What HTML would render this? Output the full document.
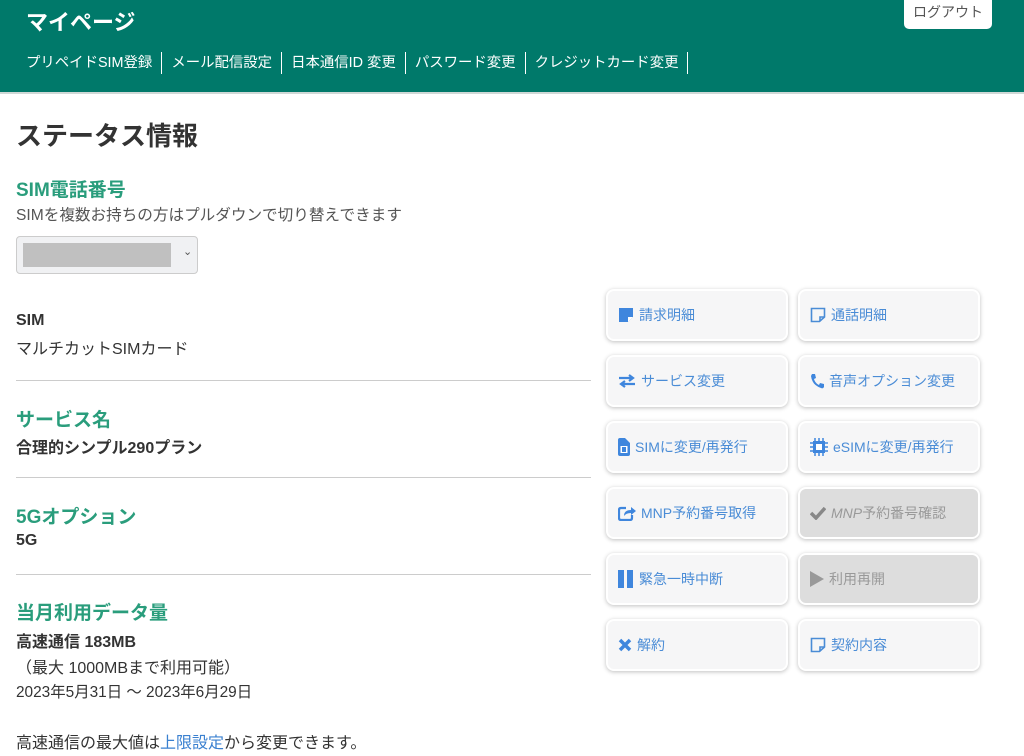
<!DOCTYPE html><html><head><meta charset="utf-8"><style>
body{margin:0;width:1024px;height:756px;overflow:hidden;background:#fff;font-family:"Liberation Sans","Noto Sans CJK JP",sans-serif;color:#333;position:relative}
.hd{position:absolute;left:0;top:0;width:1024px;height:92px;background:#00796a;border-bottom:2px solid #cfd8d6}
.t{position:absolute}
.nav{position:absolute;top:52px;left:26px;display:flex;font-size:14.4px;color:#fff}
.nav span{padding:0 9px;border-right:1px solid #fff;line-height:22px}
.nav span:first-child{padding-left:0}
.lo{position:absolute;left:904px;top:0;width:88px;height:29px;background:#fff;border-radius:0 0 5px 5px;font-size:14px;color:#555;text-align:center;line-height:24px}
.g{color:#2a9d7c;font-weight:bold;font-size:19px}
.hr{position:absolute;left:16px;width:575px;height:1px;background:#ccc}
.b{position:absolute;height:48px;background:#f6f6f7;border:2px solid #fff;border-radius:8px;box-shadow:0 1px 4px rgba(0,0,0,.25);font-size:14px;color:#4a8cd6;display:flex;align-items:center;padding-left:10px;box-sizing:content-box;width:168px}
.b.d{background:#ddd;color:#999}
.b svg{margin-right:5px}
</style></head><body>
<div class="hd"></div>
<div class="t" style="left:26px;top:5px;font-size:22px;font-weight:bold;color:#fff">マイページ</div>
<div class="nav"><span>プリペイドSIM登録</span><span>メール配信設定</span><span>日本通信ID 変更</span><span>パスワード変更</span><span>クレジットカード変更</span></div>
<div class="lo">ログアウト</div>
<div class="t" style="left:16px;top:116px;font-size:26px;font-weight:bold;color:#333">ステータス情報</div>
<div class="t g" style="left:16px;top:175px">SIM電話番号</div>
<div class="t" style="left:16px;top:203px;font-size:15.6px;color:#555">SIMを複数お持ちの方はプルダウンで切り替えできます</div>
<div class="t" style="left:16px;top:236px;width:180px;height:36px;border:1px solid #ccc;border-radius:4px;background:#f0f1f3"><div style="position:absolute;left:6px;top:6px;width:148px;height:24px;background:#c0c0c0"></div><div style="position:absolute;left:166px;top:8px;font-size:11px;color:#555">⌄</div></div>
<div class="t" style="left:16px;top:312px;font-size:16px;font-weight:bold">SIM</div>
<div class="t" style="left:16px;top:335px;font-size:16px">マルチカットSIMカード</div>
<div class="hr" style="top:380px"></div>
<div class="t g" style="left:16px;top:405px">サービス名</div>
<div class="t" style="left:16px;top:434px;font-size:16px;font-weight:bold">合理的シンプル290プラン</div>
<div class="hr" style="top:477px"></div>
<div class="t g" style="left:16px;top:502px">5Gオプション</div>
<div class="t" style="left:16px;top:532px;font-size:16px;font-weight:bold">5G</div>
<div class="hr" style="top:574px"></div>
<div class="t g" style="left:16px;top:598px">当月利用データ量</div>
<div class="t" style="left:16px;top:628px;font-size:16px;font-weight:bold">高速通信 183MB</div>
<div class="t" style="left:16px;top:654px;font-size:16px">（最大 1000MBまで利用可能）</div>
<div class="t" style="left:16px;top:680px;font-size:15.4px">2023年5月31日 〜 2023年6月29日</div>
<div class="t" style="left:16px;top:729px;font-size:16px">高速通信の最大値は<span style="color:#3a80d0">上限設定</span>から変更できます。</div>

<div class="b" style="left:606px;top:289px"><svg width="16" height="16"><path d="M1 1h14v9l-5 5H1z" fill="#3f86dd"/><path d="M10 15v-5h5" fill="#fff"/></svg>請求明細</div>
<div class="b" style="left:798px;top:289px"><svg width="16" height="16"><path d="M1.5 1.5h13v8.5l-5 4.5h-8z" fill="none" stroke="#4a8cd6" stroke-width="1.6"/><path d="M10 14v-4h4" fill="none" stroke="#4a8cd6" stroke-width="1.6"/></svg>通話明細</div>
<div class="b" style="left:606px;top:355px"><svg width="18" height="14"><path d="M1 4h13M11 1l4 3-4 3M17 10H4M7 7l-4 3 4 3" fill="none" stroke="#3f86dd" stroke-width="2.2"/></svg>サービス変更</div>
<div class="b" style="left:798px;top:355px"><svg width="14" height="16"><path d="M2 1l3 0 1 4-2 1q1 4 5 6l1-2 4 1v3q-1 2-3 1Q2 12 1 3z" fill="#3f86dd"/></svg>音声オプション変更</div>
<div class="b" style="left:606px;top:421px"><svg width="12" height="18"><path d="M0 2q0-2 2-2h5l5 5v11q0 2-2 2H2q-2 0-2-2z" fill="#3f86dd"/><rect x="2.5" y="8" width="7" height="7" fill="#fff"/><path d="M4 9h4v5H4z" fill="#3f86dd"/></svg>SIMに変更/再発行</div>
<div class="b" style="left:798px;top:421px"><svg width="18" height="18"><rect x="3" y="3" width="12" height="12" fill="#3f86dd"/><rect x="6" y="6" width="6" height="6" fill="#fff"/><path d="M5 0v3M9 0v3M13 0v3M5 15v3M9 15v3M13 15v3M0 5h3M0 9h3M0 13h3M15 5h3M15 9h3M15 13h3" stroke="#3f86dd" stroke-width="1.5"/></svg>eSIMに変更/再発行</div>
<div class="b" style="left:606px;top:487px"><svg width="18" height="16"><path d="M8 3H3q-2 0-2 2v8q0 2 2 2h9q2 0 2-2v-3" fill="none" stroke="#3f86dd" stroke-width="2.2"/><path d="M6 11q0-6 7-6V2l5 4-5 4V8q-5 0-7 3z" fill="#3f86dd"/></svg>MNP予約番号取得</div>
<div class="b d" style="left:798px;top:487px"><svg width="16" height="14"><path d="M1 7l5 5 9-10" fill="none" stroke="#888" stroke-width="3.5"/></svg><i>MNP</i>予約番号確認</div>
<div class="b" style="left:606px;top:553px"><svg width="16" height="18"><rect x="0" y="0" width="6" height="18" fill="#3f86dd"/><rect x="9" y="0" width="6" height="18" fill="#3f86dd"/></svg>緊急一時中断</div>
<div class="b d" style="left:798px;top:553px"><svg width="14" height="16"><path d="M0 0l14 8-14 8z" fill="#999"/></svg>利用再開</div>
<div class="b" style="left:606px;top:619px"><svg width="14" height="14"><path d="M2 2l10 10M12 2L2 12" stroke="#3f86dd" stroke-width="3.5"/></svg>解約</div>
<div class="b" style="left:798px;top:619px"><svg width="16" height="16"><path d="M1.5 1.5h13v8.5l-5 4.5h-8z" fill="none" stroke="#4a8cd6" stroke-width="1.6"/><path d="M10 14v-4h4" fill="none" stroke="#4a8cd6" stroke-width="1.6"/></svg>契約内容</div>
</body></html>
